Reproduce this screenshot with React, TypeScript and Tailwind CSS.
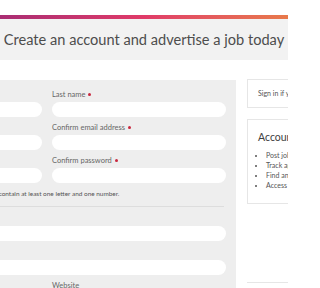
import React from "react"

const font = { fontFamily: "Lato, 'Open Sans', sans-serif" }

function Label({ text, required = true }: { text: string; required?: boolean }) {
  return (
    <div className="flex items-center h-[9px] mb-[3px] text-[7.5px] leading-[9px] text-[#666]">
      <span>{text}</span>
      {required && <span className="ml-[3px] w-[3px] h-[3px] rounded-full bg-[#c8283f]" />}
    </div>
  )
}

function Field({ label, required = true }: { label: string; required?: boolean }) {
  return (
    <div className="flex flex-col">
      <Label text={label} required={required} />
      <div className="h-[15px] rounded-full bg-white" />
    </div>
  )
}

export default function App() {
  return (
    <div className="w-[288px] h-[288px] overflow-hidden bg-white" style={font}>
      <div className="h-[15px]" />
      <div className="h-[4px] bg-gradient-to-r from-[#a92d73] via-[#e03a68] to-[#e8794a]" />
      <div className="h-[41px] bg-[#f2f2f2] flex items-center justify-center">
        <h1 className="text-[14.6px] text-[#4d4d4d] whitespace-nowrap">
          Create an account and advertise a job today
        </h1>
      </div>

      <div className="mt-[20px] flex items-start">
        {/* form panel, its left part is outside the view */}
        <div className="ml-[-142px] w-[378px] shrink-0 bg-[#eeeeee] px-[10px] pt-[10px] h-[300px]">
          <div className="grid grid-cols-2 gap-x-[10px] gap-y-[6px]">
            <Field label="First name" />
            <Field label="Last name" />
            <Field label="Email address" />
            <Field label="Confirm email address" />
            <Field label="Password" />
            <Field label="Confirm password" />
          </div>
          <p className="mt-[7px] text-[6.45px] leading-[8px] text-[#555] whitespace-nowrap">
            Password must be 8 characters long and must contain at least one letter and one number.
          </p>
          <div className="mt-[8px] mr-[2px] h-px bg-[#dddddd]" />
          <div className="mt-[7px] flex flex-col gap-[7px]">
            <Field label="Company name" />
            <Field label="Company address" />
          </div>
          <div className="mt-[6px] grid grid-cols-2 gap-x-[10px]">
            <Field label="Telephone" />
            <Field label="Website" required={false} />
          </div>
        </div>

        <div className="ml-[11px] w-[200px] shrink-0 flex flex-col">
          <div className="h-[29px] mt-[-1px] border border-[#e6e6e6] bg-white flex items-center px-[10px] text-[7px] text-[#555] whitespace-nowrap">
            Sign in if you already have an account
          </div>
          <div className="mt-[11px] h-[85px] border border-[#e6e6e6] bg-white px-[10px] pt-[10px]">
            <div className="text-[10.5px] leading-[14px] text-[#404040] whitespace-nowrap">Account benefits</div>
            <ul className="mt-[6px] text-[7px] leading-[10px] text-[#555] list-disc pl-[8px]">
              <li className="whitespace-nowrap">Post jobs quickly and easily</li>
              <li className="whitespace-nowrap">Track applications online</li>
              <li className="whitespace-nowrap">Find and contact candidates</li>
              <li className="whitespace-nowrap">Access your invoices</li>
            </ul>
          </div>
          <div className="mt-[78px] h-[20px] border-t border-[#e6e6e6] bg-white" />
        </div>
      </div>
    </div>
  )
}
